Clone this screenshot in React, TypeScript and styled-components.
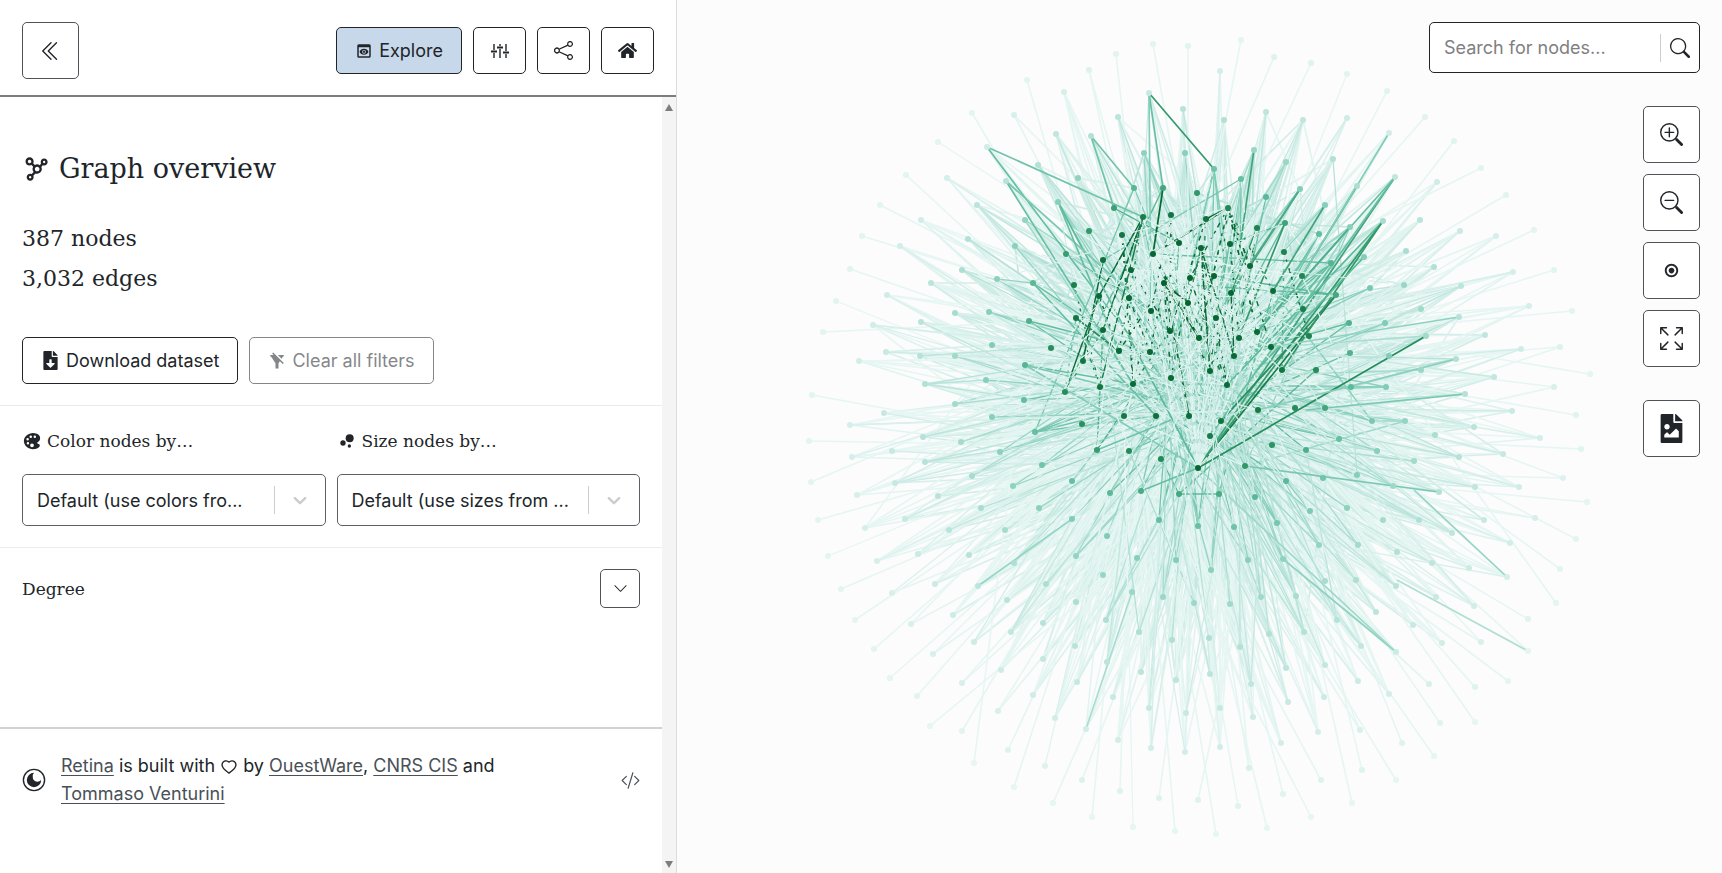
import React from "react";
import styled, { createGlobalStyle } from "styled-components";
import {
  BsChevronDoubleLeft,
  BsShare,
  BsZoomIn,
  BsZoomOut,
  BsArrowsFullscreen,
  BsSearch,
  BsCodeSlash,
  BsChevronDown,
} from "react-icons/bs";
import { MdPreview, MdBubbleChart } from "react-icons/md";
import { FaHome, FaFileDownload, FaFileImage } from "react-icons/fa";
import { RiFilterOffFill } from "react-icons/ri";
import { IoColorPalette } from "react-icons/io5";
import { BiNetworkChart, BiRadioCircleMarked } from "react-icons/bi";
import { AiOutlineHeart } from "react-icons/ai";

const ink = "#212529";
const slab = '"DejaVu Serif", "Liberation Serif", serif';
const sans = 'Inter, "Open Sans", "Liberation Sans", sans-serif';

const GlobalStyle = createGlobalStyle`
  *, *::before, *::after { box-sizing: border-box; }
  body { margin: 0; font-family: ${sans}; font-size: 18px; color: ${ink}; background: #fff; }
  button, select, input { font: inherit; color: inherit; }
  svg { display: block; flex: none; }
`;

const Page = styled.div`
  display: grid;
  grid-template-columns: minmax(0, 677px) minmax(0, 1fr);
  height: 100vh;
  overflow: hidden;
`;

const SidePanel = styled.aside`
  display: flex;
  flex-direction: column;
  min-height: 0;
  border-right: 1px solid #dcdcdc;
  background: #fff;
`;

const PanelHeader = styled.header`
  display: flex;
  align-items: center;
  justify-content: space-between;
  height: 97px;
  flex: none;
  padding: 6px 22px 0;
  border-bottom: 2px solid #7b7e81;
`;

const Toolbar = styled.nav`
  display: flex;
  gap: 11px;
`;

const Button = styled.button<{ $active?: boolean; $icon?: boolean }>`
  display: inline-flex;
  align-items: center;
  justify-content: center;
  gap: 6px;
  height: 47px;
  min-width: 53px;
  padding: 0 ${(p) => (p.$icon ? 0 : 18)}px;
  border: 1px solid ${ink};
  border-radius: 5px;
  background: ${(p) => (p.$active ? "#c8d8eb" : "#fff")};
  white-space: nowrap;
  cursor: pointer;

  &:disabled {
    opacity: 0.55;
    cursor: default;
  }
`;

const SquareButton = styled.button<{ $small?: boolean }>`
  display: flex;
  align-items: center;
  justify-content: center;
  width: ${(p) => (p.$small ? 40 : 57)}px;
  height: ${(p) => (p.$small ? 39 : 57)}px;
  padding: 0;
  border: 1px solid #4f5357;
  border-radius: 5px;
  background: #fff;
  cursor: pointer;
`;

const PanelBody = styled.div`
  display: flex;
  flex: 1;
  min-height: 0;
`;

const Content = styled.div`
  display: flex;
  flex-direction: column;
  flex: 1;
  min-width: 0;
`;

const ScrollTrack = styled.div`
  display: flex;
  flex-direction: column;
  align-items: center;
  justify-content: space-between;
  width: 14px;
  padding: 7px 0 5px;
  background: #f4f4f4;
`;

const Section = styled.section<{ $top?: number }>`
  padding: ${(p) => p.$top ?? 21}px 22px 21px;
  border-bottom: 1px solid #ececec;
`;

const Title = styled.h1`
  display: flex;
  align-items: center;
  gap: 9px;
  margin: 0;
  font: 400 27px/36px ${slab};
`;

const Counts = styled.p`
  margin: 32px 0 38px;
  font: 400 22px/40px ${slab};
`;

const Actions = styled.div`
  display: flex;
  gap: 11px;
`;

const FieldRow = styled.div`
  display: grid;
  grid-template-columns: 1fr 1fr;
  gap: 11px;
`;

const Field = styled.div`
  min-width: 0;
`;

const FieldLabel = styled.label`
  display: flex;
  align-items: center;
  gap: 5px;
  margin-bottom: 19px;
  font: 400 17px/28px ${slab};
`;

const SelectBox = styled.div`
  display: grid;
  align-items: center;
  height: 52px;
  border: 1px solid #5c6064;
  border-radius: 5px;

  & > * {
    grid-area: 1 / 1;
  }
`;

const Select = styled.select`
  appearance: none;
  width: 100%;
  height: 50px;
  padding: 0 56px 0 14px;
  border: 0;
  background: transparent;
`;

const Indicator = styled.span`
  display: flex;
  align-items: center;
  justify-self: end;
  height: 28px;
  padding: 0 14px;
  border-left: 1px solid #ccc;
  color: #ccc;
  pointer-events: none;
`;

const AttributeRow = styled.div`
  display: flex;
  align-items: center;
  justify-content: space-between;
  padding: 21px 22px;
`;

const AttributeName = styled.h2`
  margin: 0;
  font: 400 17px/28px ${slab};
`;

const Footer = styled.footer`
  display: flex;
  align-items: center;
  gap: 15px;
  margin-top: auto;
  padding: 23px 22px 65px;
  border-top: 2px solid #d0d2d3;
`;

const Credits = styled.p`
  flex: 1;
  margin: 0;
  padding-right: 90px;
  font-size: 18px;
  line-height: 28px;

  svg {
    display: inline-block;
    vertical-align: -4px;
  }
`;

const Link = styled.a`
  color: #495057;
  text-decoration: underline;
  text-underline-offset: 3px;
`;

const Stage = styled.main`
  position: relative;
  min-width: 0;
  min-height: 0;
  background: #fcfcfc;
`;

const GraphSvg = styled.svg`
  width: 100%;
  height: 100%;
`;

const Overlay = styled.div`
  position: absolute;
  top: 22px;
  right: 22px;
  display: flex;
  flex-direction: column;
  align-items: flex-end;
`;

const SearchForm = styled.form`
  display: flex;
  align-items: center;
  width: 271px;
  height: 51px;
  border: 1px solid ${ink};
  border-radius: 5px;
  background: #fff;
`;

const SearchInput = styled.input`
  flex: 1;
  min-width: 0;
  padding: 0 14px;
  border: 0;
  outline: 0;
  background: transparent;

  &::placeholder {
    color: #808080;
    opacity: 1;
  }
`;

const SearchButton = styled.button`
  display: flex;
  align-items: center;
  height: 28px;
  padding: 0 9px;
  border: 0;
  border-left: 1px solid #ccc;
  background: transparent;
`;

const MapControls = styled.div`
  display: flex;
  flex-direction: column;
  gap: 11px;
  margin-top: 33px;
`;

/* ---------- graph data ---------- */

type Point = [number, number];

const HUB: Point = [1198, 468];
const STAR: Point = [1153, 254];

// Layout coordinates of the nodes, as x,y pairs
const NODE_DATA = `
1089,70 1027,80 1064,92 972,113 1014,115 1056,134 1091,136 1118,117 1149,93 1183,109 1144,153 1185,153 987,147 1038,165
1078,178 1006,181 947,178 1134,188 1163,188 1197,193 1058,202 1114,208 1143,217 1171,215 977,205 1025,220 1089,231 1122,235
1179,243 1153,254 1015,246 968,239 1066,254 1103,260 1131,270 1190,278 962,270 997,279 1220,71 1224,120 1266,112 1303,120
1347,118 1347,74 1311,63 1387,91 1425,117 1389,133 1395,177 1437,182 1420,220 1254,150 1286,162 1333,159 1214,169 1241,179
1266,197 1300,189 1357,186 1325,205 1228,208 1206,219 1285,223 1257,228 1350,227 1319,234 1383,221 1201,248 1230,244
1284,252 1364,257 1331,263 1406,251 1434,267 1250,266 1302,276 1214,276 1033,283 1074,285 1099,296 1129,298 1164,283
1188,303 1151,311 1076,318 1103,330 1170,331 1199,338 1029,321 989,312 955,313 992,345 955,356 1051,348 1083,361 1119,351
1150,352 1025,365 986,380 1171,378 1100,387 1133,384 1065,392 1024,400 955,404 992,417 1124,416 1156,416 1189,416 1082,424
1035,432 961,442 1000,452 1097,450 1129,451 1161,459 1042,465 1198,468 1072,481 1013,486 972,476 1231,293 1273,291 1336,295
1370,288 1404,285 1461,286 1303,309 1421,309 1459,317 1216,318 1257,332 1239,338 1271,347 1309,336 1349,323 1385,323
1426,336 1485,335 1234,356 1210,371 1350,353 1389,356 1456,359 1282,370 1316,370 1421,370 1227,385 1351,387 1386,387
1258,410 1295,408 1325,408 1465,394 1221,421 1372,421 1405,421 1210,436 1474,427 1435,435 1339,439 1272,445 1306,450
1377,451 1414,461 1459,457 1245,466 1286,481 1323,478 1357,475 1393,486 1475,487 1454,141 1481,168 1506,195 1460,231
1496,236 1534,230 1554,270 1513,272 1529,306 1572,311 1521,349 1560,347 1590,374 1554,387 1494,377 1512,411 1576,415
1540,438 1581,449 1503,454 1563,478 811,482 895,483 857,495 818,520 865,528 938,496 905,519 981,508 1110,493 1141,491
1179,494 1039,508 1072,519 1159,520 1198,526 949,530 1005,530 1107,536 828,556 877,561 918,554 969,555 1076,556 1137,558
1176,560 1014,563 1103,575 1046,584 841,589 892,593 935,584 978,586 1132,592 1163,597 1194,603 1007,600 1076,602 953,615
855,620 911,624 1043,623 1106,620 1139,632 1011,632 1172,640 974,642 874,649 1075,646 933,654 1043,659 1107,662 1141,672
1176,680 1001,670 890,678 962,683 1077,682 1033,695 917,696 1113,697 1149,708 1186,713 998,711 1055,718 930,726 962,731
1086,729 1118,740 1151,748 1185,752 1008,750 974,763 1045,766 1014,787 1082,780 1053,803 1120,791 1159,798 1198,800
1092,817 1133,827 1175,831 1219,494 1255,497 1310,511 1347,508 1439,492 1519,487 1587,502 1535,518 1484,520 1510,543
1452,533 1419,520 1383,520 1576,539 1560,569 1556,603 1507,577 1469,568 1432,563 1397,552 1358,545 1319,545 1277,523
1234,527 1248,560 1283,559 1211,570 1325,581 1356,580 1396,586 1436,597 1474,606 1528,619 1528,651 1481,642 1442,643
1413,625 1376,612 1296,596 1261,597 1230,604 1337,620 1304,632 1269,634 1240,647 1209,638 1361,646 1396,652 1358,681
1325,665 1286,668 1251,684 1210,674 1429,684 1475,687 1508,681 1389,694 1324,697 1288,702 1253,717 1220,708 1220,747
1281,743 1318,732 1360,730 1440,723 1475,722 1402,743 1434,756 1362,770 1396,780 1352,803 1321,780 1249,768 1283,794
1238,806 1267,828 1311,817 1216,834 1116,54 1153,44 1188,46 1241,40 1274,57 938,142 906,175 880,205 921,220 862,236
900,246 850,269 931,283 836,301 887,295 921,322 873,325 823,332 886,352 920,356 859,361 812,395 925,384 850,425 884,413
923,437 809,441 852,457 892,451 925,462`;

const nodes: Point[] = NODE_DATA.trim()
  .split(/\s+/)
  .map((pair) => pair.split(",").map(Number) as Point);

const FOCUS: Point = [1180, 280];
const DISC = { x: 1200, y: 435, r: 400 };

// 0 at the dense core, 1 on the rim of the disc
function remoteness([x, y]: Point): number {
  const dx = x - FOCUS[0];
  const dy = y - FOCUS[1];
  const d = Math.hypot(dx, dy);
  if (d === 0) return 0;
  const ux = dx / d;
  const uy = dy / d;
  const fx = FOCUS[0] - DISC.x;
  const fy = FOCUS[1] - DISC.y;
  const b = ux * fx + uy * fy;
  const c = fx * fx + fy * fy - DISC.r * DISC.r;
  return Math.min(1, d / (-b + Math.sqrt(b * b - c)));
}

const RAMP: [number, number[]][] = [
  [0, [4, 98, 44]],
  [0.24, [10, 108, 56]],
  [0.34, [38, 142, 92]],
  [0.42, [92, 186, 154]],
  [0.5, [130, 205, 184]],
  [0.62, [170, 221, 209]],
  [0.8, [204, 235, 229]],
  [1, [230, 246, 243]],
];

function ramp(t: number): string {
  const v = Math.max(0, Math.min(1, t));
  let i = 1;
  while (RAMP[i][0] < v) i += 1;
  const [t0, a] = RAMP[i - 1];
  const [t1, b] = RAMP[i];
  const k = (v - t0) / (t1 - t0);
  return `rgb(${a.map((c, n) => Math.round(c + (b[n] - c) * k)).join(",")})`;
}

function makeRandom(seed: number) {
  let s = seed;
  return () => {
    s = (s * 1664525 + 1013904223) % 4294967296;
    return s / 4294967296;
  };
}

interface Edge {
  from: Point;
  to: Point;
  color: string;
  dash?: string;
  width: number;
}

const STRONG_EDGES: [number, number, number, number, number][] = [
  [1198, 468, 1426, 336, 0.34],
  [1198, 468, 1395, 177, 0.38],
  [1198, 468, 1336, 295, 0.28],
  [1198, 468, 1383, 221, 0.36],
  [1221, 421, 1336, 295, 0.34],
  [1227, 385, 1383, 221, 0.42],
  [1198, 468, 1058, 202, 0.42],
  [1198, 468, 1025, 365, 0.5],
  [1210, 436, 1395, 177, 0.44],
  [1153, 254, 1228, 208, 0.2],
  [1206, 219, 1228, 208, 0.1],
  [1149, 93, 1163, 188, 0.44],
  [1149, 93, 1214, 169, 0.36],
  [1149, 93, 1151, 311, 0.5],
  [987, 147, 1099, 296, 0.44],
  [987, 147, 1143, 217, 0.46],
  [1006, 181, 1133, 384, 0.44],
  [1006, 181, 1151, 311, 0.48],
  [1395, 177, 1257, 332, 0.44],
  [1357, 186, 1302, 276, 0.36],
  [1300, 189, 1250, 266, 0.36],
  [1300, 189, 1231, 293, 0.4],
  [1285, 223, 1239, 338, 0.36],
  [1254, 150, 1241, 240, 0.38],
  [1325, 205, 1273, 291, 0.38],
  [1383, 221, 1282, 370, 0.36],
  [1350, 227, 1257, 332, 0.4],
  [1364, 257, 1257, 370, 0.42],
  [1389, 133, 1302, 276, 0.5],
  [1091, 136, 1134, 188, 0.46],
  [1091, 136, 1114, 208, 0.46],
  [1033, 283, 1156, 416, 0.44],
  [1058, 202, 1119, 351, 0.44],
  [1076, 318, 1119, 351, 0.34],
  [1025, 365, 1161, 400, 0.48],
  [1465, 394, 1306, 410, 0.48],
  [1097, 450, 1171, 420, 0.46],
  [1141, 491, 1198, 468, 0.44],
  [1439, 492, 1245, 466, 0.48],
  [1507, 577, 1414, 490, 0.56],
  [1396, 652, 1283, 559, 0.54],
  [1198, 468, 1396, 652, 0.58],
  [978, 586, 1072, 519, 0.56],
  [1528, 651, 1397, 580, 0.64],
  [1086, 729, 1132, 592, 0.62],
  [1459, 317, 1271, 347, 0.54],
  [1456, 359, 1258, 410, 0.52],
  [1153, 254, 1210, 371, 0.2],
  [1164, 283, 1189, 416, 0.22],
  [1164, 283, 1199, 338, 0.14],
  [1164, 283, 1188, 303, 0.1],
  [1153, 254, 1199, 338, 0.12],
  [1163, 188, 1153, 254, 0.16],
];

function buildEdges(): Edge[] {
  const random = makeRandom(41);
  const scored = nodes.map((p) => ({ p, t: remoteness(p) }));
  const base: Edge[] = [];
  const mid: Edge[] = [];
  const top: Edge[] = [];

  scored.forEach(({ p, t }) => {
    const count = t > 0.88 ? 1 : t > 0.75 ? 5 : t > 0.6 ? 11 : t > 0.4 ? 18 : 12;
    const heading = Math.atan2(p[1] - 390, p[0] - 1198);
    let made = 0;
    for (let guard = 0; made < count && guard < 900; guard += 1) {
      const other = scored[Math.floor(random() * scored.length)];
      if (other.p === p || other.t > t || other.t > 0.52) continue;
      const angle = Math.atan2(p[1] - other.p[1], p[0] - other.p[0]);
      const drift = Math.abs(Math.atan2(Math.sin(angle - heading), Math.cos(angle - heading)));
      if (t > 0.4 && drift > 0.22 && random() > 0.02) continue;
      made += 1;
      const bright = random();
      if (bright < 0.12 && t > 0.36) {
        mid.push({ from: p, to: other.p, color: ramp(t + 0.03), width: 1.3 });
      } else {
        const shade = t < 0.45 ? 0.6 + random() * 0.36 : t + 0.1 + random() * 0.26;
        base.push({ from: p, to: other.p, color: ramp(shade), width: 1.6 });
      }
    }
    if (t < 0.93) {
      base.push({ from: p, to: HUB, color: ramp(Math.max(0.84, t + 0.1)), width: 1.6 });
    }
  });

  // Short segments between neighbours of the core, mostly running upwards
  const core = scored.filter((n) => n.t < 0.34 && n.p[1] < 400);
  for (let i = 0; i < 420; i += 1) {
    const a = core[Math.floor(random() * core.length)].p;
    const b = core[Math.floor(random() * core.length)].p;
    if (Math.abs(a[0] - b[0]) > 45 || Math.abs(a[1] - b[1]) < 50) continue;
    mid.push({
      from: a,
      to: b,
      color: ramp(0.12 + random() * 0.34),
      dash: random() < 0.85 ? "3 5 2 7 5 4" : undefined,
      width: 1.4,
    });
  }

  STRONG_EDGES.forEach(([x1, y1, x2, y2, t]) =>
    mid.push({ from: [x1, y1], to: [x2, y2], color: ramp(t), width: 1.7 }),
  );

  for (let i = 0; i < 60; i += 1) {
    const b = core[Math.floor(random() * core.length)].p;
    top.push({
      from: random() < 0.5 ? STAR : HUB,
      to: b,
      color: ramp(0.9 + random() * 0.1),
      dash: "14 3 8 4",
      width: 1.2,
    });
  }
  for (let i = 0; i < 190; i += 1) {
    const a = core[Math.floor(random() * core.length)].p;
    const b = scored[Math.floor(random() * scored.length)];
    if (b.t > 0.6) continue;
    top.push({ from: a, to: b.p, color: ramp(0.78 + random() * 0.22), dash: "20 5 9 6", width: 1.1 });
  }
  return [...base, ...mid, ...top];
}

const edges = buildEdges();

function Graph() {
  return (
    <GraphSvg viewBox="677 0 1045 873" role="img" aria-label="Network graph">
      <g>
        {edges.map((e, i) => (
          <line
            key={i}
            x1={e.from[0]}
            y1={e.from[1]}
            x2={e.to[0]}
            y2={e.to[1]}
            stroke={e.color}
            strokeWidth={e.width}
            strokeDasharray={e.dash}
          />
        ))}
      </g>
      <g>
        {nodes.map((p, i) => (
          <circle
            key={i}
            cx={p[0]}
            cy={p[1]}
            r={3}
            fill={p[0] === HUB[0] && p[1] === HUB[1] ? ramp(0.1) : ramp(remoteness(p))}
          />
        ))}
      </g>
    </GraphSvg>
  );
}

function RetinaLogo() {
  return (
    <svg width="24" height="24" viewBox="0 0 24 24" aria-hidden="true">
      <circle cx="12" cy="12" r="10.6" fill="none" stroke={ink} strokeWidth="1.4" />
      <path
        d="M12 4.800a7.200 7.200 0 1 0 7.200 7.200 5 5 0 0 1-4.200 1.800 4.400 4.400 0 0 1-4.200-4.600A5 5 0 0 1 12 4.800Z"
        fill={ink}
      />
    </svg>
  );
}

function SlidersIcon() {
  return (
    <svg width="18" height="18" viewBox="0 0 18 18" fill="none" stroke={ink} aria-hidden="true">
      <path strokeWidth="1.4" d="M3 2v6M3 11v5M9 2v2M9 7v9M15 2v7M15 12v4" />
      <path strokeWidth="2" d="M0 9.500h6M6 5.500h6M12 10.500h6" />
    </svg>
  );
}

function Arrow({ down }: { down?: boolean }) {
  return (
    <svg width="8" height="7" viewBox="0 0 8 7" aria-hidden="true">
      <path d={down ? "M0 0h8L4 7Z" : "M0 7h8L4 0Z"} fill="#7d7d7d" />
    </svg>
  );
}

interface SelectFieldProps {
  id: string;
  icon: React.ReactNode;
  label: string;
  value: string;
}

function SelectField({ id, icon, label, value }: SelectFieldProps) {
  return (
    <Field>
      <FieldLabel htmlFor={id}>
        {icon}
        {label}
      </FieldLabel>
      <SelectBox>
        <Select id={id}>
          <option>{value}</option>
        </Select>
        <Indicator>
          <svg width="22" height="22" viewBox="0 0 20 20" aria-hidden="true">
            <path
              fill="currentColor"
              d="M4.516 7.548c0.436-0.446 1.043-0.481 1.576 0l3.908 3.747 3.908-3.747c0.533-0.481 1.141-0.446 1.574 0 0.436 0.445 0.408 1.197 0 1.615-0.406 0.418-4.695 4.502-4.695 4.502-0.217 0.223-0.502 0.335-0.787 0.335s-0.57-0.112-0.789-0.335c0 0-4.287-4.084-4.695-4.502s-0.436-1.17 0-1.615z"
            />
          </svg>
        </Indicator>
      </SelectBox>
    </Field>
  );
}

export default function App() {
  return (
    <Page>
      <GlobalStyle />
      <SidePanel>
        <PanelHeader>
          <SquareButton aria-label="Collapse panel">
            <BsChevronDoubleLeft size={22} />
          </SquareButton>
          <Toolbar>
            <Button $active>
              <MdPreview size={18} />
              Explore
            </Button>
            <Button $icon aria-label="Settings">
              <SlidersIcon />
            </Button>
            <Button $icon aria-label="Share">
              <BsShare size={19} />
            </Button>
            <Button $icon aria-label="Home">
              <FaHome size={19} />
            </Button>
          </Toolbar>
        </PanelHeader>
        <PanelBody>
          <Content>
            <Section $top={54}>
              <Title>
                <BiNetworkChart size={28} />
                Graph overview
              </Title>
              <Counts>
                387 nodes
                <br />
                3,032 edges
              </Counts>
              <Actions>
                <Button>
                  <FaFileDownload size={19} />
                  Download dataset
                </Button>
                <Button disabled>
                  <RiFilterOffFill size={18} />
                  Clear all filters
                </Button>
              </Actions>
            </Section>
            <Section>
              <FieldRow>
                <SelectField
                  id="color-by"
                  icon={<IoColorPalette size={20} />}
                  label="Color nodes by…"
                  value="Default (use colors fro..."
                />
                <SelectField
                  id="size-by"
                  icon={<MdBubbleChart size={20} />}
                  label="Size nodes by…"
                  value="Default (use sizes from ..."
                />
              </FieldRow>
            </Section>
            <AttributeRow>
              <AttributeName>Degree</AttributeName>
              <SquareButton $small aria-label="Expand Degree">
                <BsChevronDown size={15} />
              </SquareButton>
            </AttributeRow>
            <Footer>
              <RetinaLogo />
              <Credits>
                <Link href="#retina">Retina</Link> is built with <AiOutlineHeart size={18} /> by{" "}
                <Link href="#ouestware">OuestWare</Link>, <Link href="#cis">CNRS CIS</Link> and{" "}
                <Link href="#venturini">Tommaso Venturini</Link>
              </Credits>
              <Link href="#source" aria-label="Source code">
                <BsCodeSlash size={19} />
              </Link>
            </Footer>
          </Content>
          <ScrollTrack>
            <Arrow />
            <Arrow down />
          </ScrollTrack>
        </PanelBody>
      </SidePanel>
      <Stage>
        <Graph />
        <Overlay>
          <SearchForm>
            <SearchInput aria-label="Search for nodes" placeholder="Search for nodes..." />
            <SearchButton type="button" aria-label="Search">
              <BsSearch size={20} />
            </SearchButton>
          </SearchForm>
          <MapControls>
            <SquareButton aria-label="Zoom in">
              <BsZoomIn size={23} />
            </SquareButton>
            <SquareButton aria-label="Zoom out">
              <BsZoomOut size={23} />
            </SquareButton>
            <SquareButton aria-label="Center view">
              <BiRadioCircleMarked size={23} />
            </SquareButton>
            <SquareButton aria-label="Fullscreen">
              <BsArrowsFullscreen size={23} />
            </SquareButton>
          </MapControls>
          <MapControls>
            <SquareButton aria-label="Save as image">
              <FaFileImage size={29} />
            </SquareButton>
          </MapControls>
        </Overlay>
      </Stage>
    </Page>
  );
}
